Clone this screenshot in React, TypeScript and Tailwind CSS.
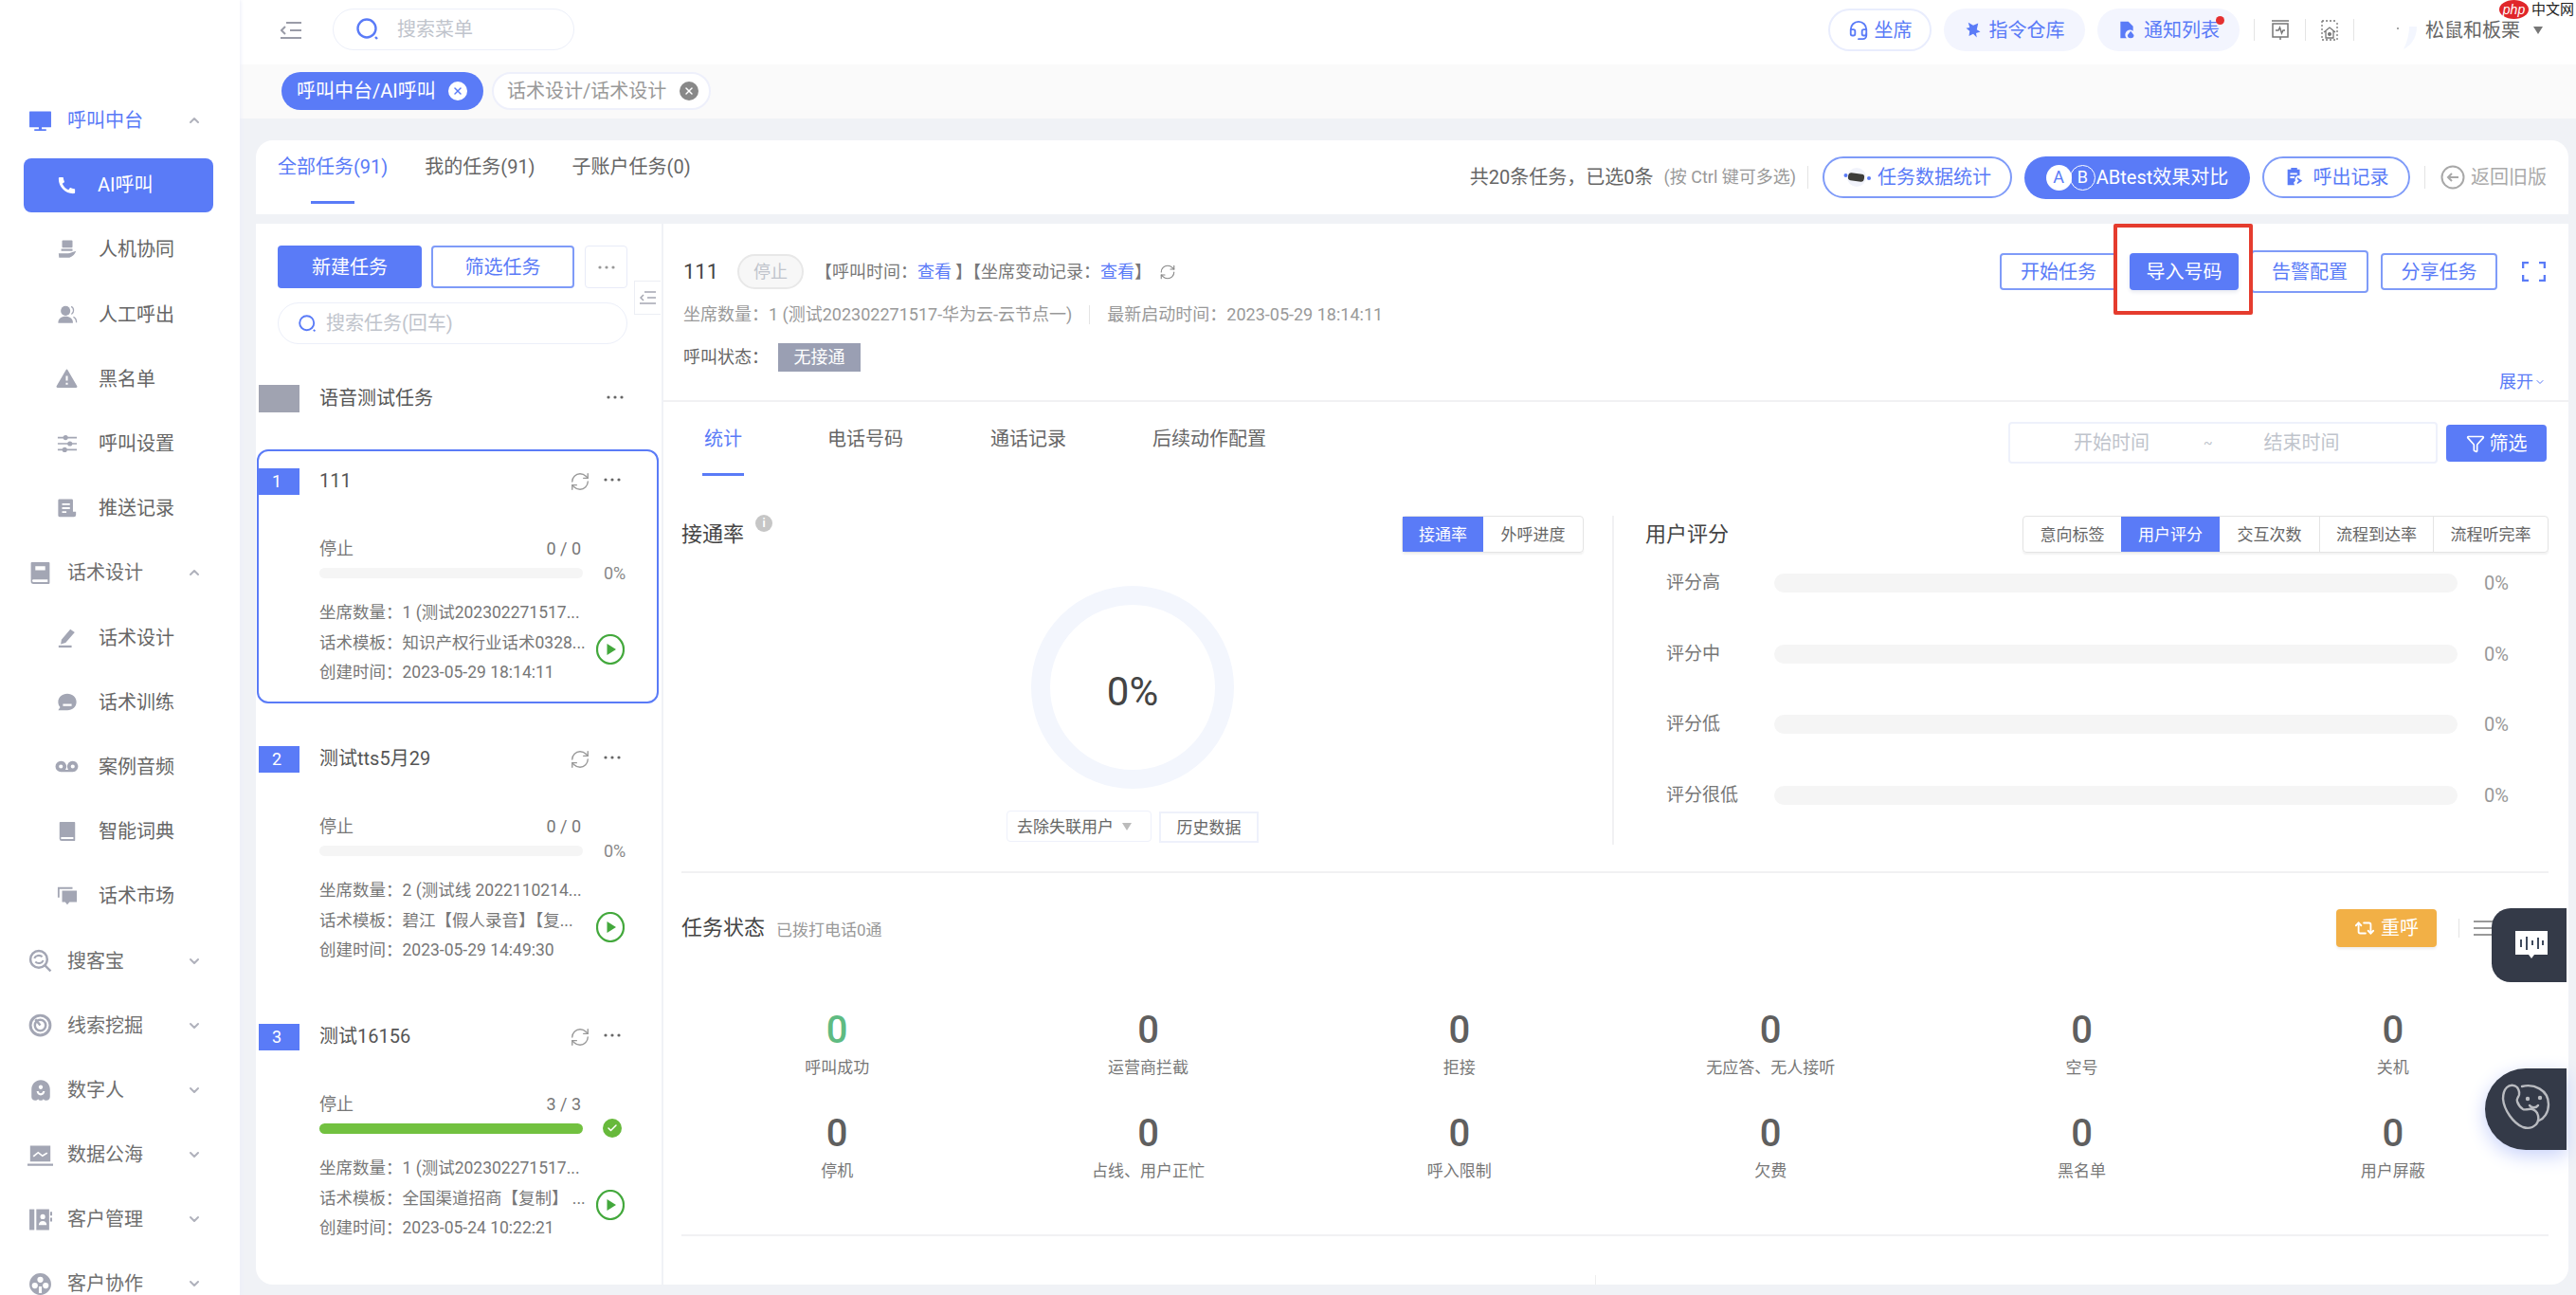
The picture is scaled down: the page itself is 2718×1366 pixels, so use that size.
import React from "react";
import { Check, ChevronDown, ChevronUp, RefreshCw, X, Filter, Repeat2, Headset } from "lucide-react";
import { RiPhoneFill, RiAlertFill, RiGhostSmileFill } from "react-icons/ri";

const P = "#5a7bf7";

function G({ size = 24, children, className = "" }: { size?: number; children: React.ReactNode; className?: string }) {
  return (
    <svg width={size} height={size} viewBox="0 0 24 24" fill="currentColor" className={className}>
      {children}
    </svg>
  );
}

const icons: Record<string, React.ReactNode> = {
  monitor: <path d="M1.5 2.5h21a.5.5 0 0 1 .5.5v15a.5.5 0 0 1-.5.5h-9v2H18v1.5H6V20.500h4.500v-2h-9A.5.5 0 0 1 1 18V3a.5.5 0 0 1 .5-.5z" />,
  hand: (
    <>
      <path d="M7 1.500h10a1 1 0 0 1 1 1V9a1 1 0 0 1-1 1H7a1 1 0 0 1-1-1V2.500a1 1 0 0 1 1-1zM5 11.500h13V14H5z" />
      <path d="M2 16.500h11c1.500 0 2.500-.3 4-1l5-1.500c-1 3.500-3.500 6.500-7.500 7.500H2.500z" />
    </>
  ),
  people: (
    <>
      <circle cx="10" cy="7.500" r="5.500" />
      <path d="M1.500 21.500c0-5 3.500-7.500 8.500-7.500s8.500 2.500 8.500 7.500z" />
      <path d="M16.500 2.500c3.500 1.500 3.500 7 .3 9M19 14.500c2.500 1 3.500 3.500 3.500 6.500" fill="none" stroke="currentColor" strokeWidth="1.400" />
    </>
  ),
  sliders: (
    <>
      <path d="M1 5h22M1 12h22M1 19h22" fill="none" stroke="currentColor" strokeWidth="1.800" />
      <circle cx="10" cy="5" r="2.800" />
      <circle cx="15" cy="12" r="2.800" />
      <circle cx="9" cy="19" r="2.800" />
    </>
  ),
  doc: (
    <path
      fillRule="evenodd"
      d="M3 1.500h14a1.500 1.500 0 0 1 1.500 1.500v13H22v3.500a2.500 2.500 0 0 1-2.500 2.500H3a1.500 1.500 0 0 1-1.500-1.500V3A1.500 1.500 0 0 1 3 1.500zM6 6.500v2h9v-2zM6 11v2h9v-2zM6 15.500v2h5v-2z"
    />
  ),
  book: (
    <path
      fillRule="evenodd"
      d="M3.500 1h17a1 1 0 0 1 1 1v20a1 1 0 0 1-1 1H5a2.500 2.500 0 0 1-2.500-2.500V2a1 1 0 0 1 1-1zM7 5v4h10V5zM5 18.500c-1.500 0-1.500 2.500 0 2.500h14.500v-2.500z"
    />
  ),
  pen: (
    <>
      <path d="M15.500 2l5 3.500-10.500 12-5.500 1.500.8-5z" />
      <path d="M2 20.500h15V23H2z" />
    </>
  ),
  chat: (
    <path
      fillRule="evenodd"
      d="M12 2c6 0 10.500 3.800 10.500 9.500S18 21 12 21H1.500l2.300-3.500C2.300 15.800 1.500 13.800 1.500 11.500 1.500 5.800 6 2 12 2zM7 13.500v2.500h10v-2.500z"
    />
  ),
  voicemail: (
    <path
      fillRule="evenodd"
      d="M6 6.500a5.500 5.500 0 0 1 4.500 8.800h3A5.500 5.500 0 1 1 18 17.500H6a5.500 5.500 0 1 1 0-11zM6 10a2 2 0 1 0 0 4 2 2 0 0 0 0-4zm12 0a2 2 0 1 0 0 4 2 2 0 0 0 0-4z"
    />
  ),
  dict: (
    <path
      fillRule="evenodd"
      d="M4 1h16a1 1 0 0 1 1 1v20a1 1 0 0 1-1 1H5.500A2.500 2.500 0 0 1 3 20.500V2a1 1 0 0 1 1-1zM5.500 18.500c-1.300 0-1.300 2.200 0 2.200H19v-2.200z"
    />
  ),
  market: (
    <>
      <path d="M1 2h17v2H3v10H1z" />
      <path d="M6 6h17v13h-8.500L12 22l-2.500-3H6z" />
    </>
  ),
  searchCircle: (
    <>
      <circle cx="10.500" cy="10.500" r="8.500" fill="none" stroke="currentColor" strokeWidth="2.400" />
      <path d="M16.500 16.500l6 6" stroke="currentColor" strokeWidth="2.400" />
      <path d="M6 9.500c1-3 5.500-4 8-1.500M15 11.500c-1 3-5.500 4-8 1.500" fill="none" stroke="currentColor" strokeWidth="2" />
    </>
  ),
  target: (
    <>
      <circle cx="12" cy="12" r="10" fill="none" stroke="currentColor" strokeWidth="2.800" />
      <circle cx="12" cy="12" r="5.500" fill="none" stroke="currentColor" strokeWidth="2.400" />
      <path d="M7 6l5 6" stroke="currentColor" strokeWidth="2.400" />
    </>
  ),
  laptop: (
    <path
      fillRule="evenodd"
      d="M2.500 3h19v15h-19zM5 12.500l1 1.200 4-3.200 4 3 5-3-1-1.200-4 2.400-4-3-4.500 3.600zM0 20h24v2H0z"
    />
  ),
  contacts: (
    <>
      <path d="M1 1.500h5v21H1z" />
      <path
        fillRule="evenodd"
        d="M8 1.500h13v21H8zM14.500 6.500a2.500 2.500 0 1 0 0 5 2.500 2.500 0 0 0 0-5zM10.500 17.500h8c0-2.500-1.800-4-4-4s-4 1.500-4 4z"
      />
      <path d="M22 4h2v4h-2zM22 10h2v4h-2z" />
    </>
  ),
  palette: (
    <path
      fillRule="evenodd"
      d="M12 1a11 11 0 1 1 0 22 11 11 0 0 1 0-22zM12 4.500a3 3 0 1 0 0 6 3 3 0 0 0 0-6zM6.500 10.500a3 3 0 1 0 0 6 3 3 0 0 0 0-6zM17.500 10.500a3 3 0 1 0 0 6 3 3 0 0 0 0-6zM10.500 14.500v6.500h3v-6.500z"
    />
  ),
};

type Row = { label: string; icon: React.ReactNode; kind: "group" | "item" | "active"; open?: boolean; blue?: boolean };
const g = (n: string) => <G size={n === "laptop" ? 27 : 25}>{icons[n]}</G>;
const s = (n: string) => <G size={n === "voicemail" ? 25 : 22}>{icons[n]}</G>;
const rows: Row[] = [
  { label: "呼叫中台", icon: g("monitor"), kind: "group", open: true, blue: true },
  { label: "AI呼叫", icon: <RiPhoneFill size={23} />, kind: "active" },
  { label: "人机协同", icon: s("hand"), kind: "item" },
  { label: "人工呼出", icon: s("people"), kind: "item" },
  { label: "黑名单", icon: <RiAlertFill size={25} />, kind: "item" },
  { label: "呼叫设置", icon: s("sliders"), kind: "item" },
  { label: "推送记录", icon: s("doc"), kind: "item" },
  { label: "话术设计", icon: g("book"), kind: "group", open: true },
  { label: "话术设计", icon: s("pen"), kind: "item" },
  { label: "话术训练", icon: s("chat"), kind: "item" },
  { label: "案例音频", icon: s("voicemail"), kind: "item" },
  { label: "智能词典", icon: s("dict"), kind: "item" },
  { label: "话术市场", icon: s("market"), kind: "item" },
  { label: "搜客宝", icon: g("searchCircle"), kind: "group" },
  { label: "线索挖掘", icon: g("target"), kind: "group" },
  { label: "数字人", icon: <RiGhostSmileFill size={26} />, kind: "group" },
  { label: "数据公海", icon: g("laptop"), kind: "group" },
  { label: "客户管理", icon: g("contacts"), kind: "group" },
  { label: "客户协作", icon: g("palette"), kind: "group" },
];

function Sidebar() {
  return (
    <aside className="w-[253px] shrink-0 bg-white pt-[93px] overflow-hidden shadow-[1px_0_4px_#eceef8] z-10">
      {rows.map((r, i) => {
        if (r.kind === "group") {
          const Chev = r.open ? ChevronUp : ChevronDown;
          return (
            <div key={i} className={`flex h-[68.200px] items-center ${r.blue ? `text-[#5a7bf7]` : "text-[#6e6e6e]"}`}>
              <span className={`ml-[29px] flex w-[27px] justify-center ${r.blue ? "text-[#5a7bf7]" : "text-[#a3a6b4]"}`}>{r.icon}</span>
              <span className="ml-[15px] w-[126px]">{r.label}</span>
              <Chev size={16} strokeWidth={3} className="text-[#b0b2bc]" />
            </div>
          );
        }
        if (r.kind === "active") {
          return (
            <div key={i} className="flex h-[68.200px] items-center">
              <div className="ml-[25px] flex h-[57px] w-[200px] items-center rounded-[8px] bg-[#5a7bf7] text-white">
                <span className="ml-[33px] flex w-[24px] justify-center">{r.icon}</span>
                <span className="ml-[21px]">{r.label}</span>
              </div>
            </div>
          );
        }
        return (
          <div key={i} className="flex h-[68.200px] items-center text-[#666]">
            <span className="ml-[58px] flex w-[25px] justify-center text-[#a3a6b4]">{r.icon}</span>
            <span className="ml-[21px]">{r.label}</span>
          </div>
        );
      })}
    </aside>
  );
}

function SearchGlyph({ size }: { size: number }) {
  return (
    <svg width={size} height={size} viewBox="0 0 24 24" fill="none" stroke={P} strokeWidth="2.400">
      <circle cx="11" cy="11" r="9.500" />
      <path d="M20 20l2 2" />
    </svg>
  );
}

function TopBar() {
  return (
    <header className="flex h-[68px] items-start bg-white pt-[9px]">
      <svg width="22" height="20" viewBox="0 0 22 20" fill="none" stroke="#9a9ca8" strokeWidth="2" className="ml-[43px] mt-[13px]">
        <path d="M6 2h16M10 10h12M0 18h22M5 6l-4 4 4 4" />
      </svg>
      <div className="ml-[33px] flex h-[44px] w-[255px] items-center rounded-full border border-[#eceff9] bg-white">
        <span className="ml-[24px]">
          <SearchGlyph size={24} />
        </span>
        <span className="ml-[19px] text-[#c0c4cc]">搜索菜单</span>
      </div>
      <div className="ml-auto flex items-center pr-[35px] text-[#5a7bf7]">
        <div className="flex h-[45px] w-[109px] items-center justify-center gap-[6px] rounded-full border-2 border-[#e9edfd] bg-white">
          <Headset size={22} strokeWidth={2} />
          <span>坐席</span>
        </div>
        <div className="ml-[13px] flex h-[45px] w-[149px] items-center justify-center gap-[8px] rounded-full bg-[#f3f5fe]">
          <G size={18}>
            <path d="M5 1l7 4 7-3-2 9 5 3-6 2 1 6-5-5-6 3 1-7-5-4 5-1z" />
          </G>
          <span>指令仓库</span>
        </div>
        <div className="relative ml-[13px] flex h-[45px] w-[150px] items-center justify-center gap-[8px] rounded-full bg-[#f3f5fe]">
          <G size={20}>
            <path d="M4 1h10l6 6v6a6 6 0 0 0-8 9H4z" />
            <path d="M17 13l4 5a4 4 0 1 1-8 0z" />
          </G>
          <span>通知列表</span>
          <span className="absolute left-[125px] top-[8px] h-[9px] w-[9px] rounded-full bg-[#e53030]" />
        </div>
        <span className="ml-[15px] h-[23px] w-px bg-[#e4e4e4]" />
        <svg width="20" height="22" viewBox="0 0 20 22" fill="none" stroke="#777" strokeWidth="1.500" className="ml-[17px]">
          <path d="M1 1h18M2 4h16v14H2zM5 11h3l1.500-3 2 6 1.500-3h2" />
          <path d="M10 18v3" />
        </svg>
        <span className="ml-[16px] h-[23px] w-px bg-[#e4e4e4]" />
        <svg width="18" height="22" viewBox="0 0 18 22" fill="none" stroke="#777" strokeWidth="1.300" className="ml-[16px]">
          <path d="M1 1h16M1 1v20h16V1" strokeDasharray="2 2" />
          <path d="M3 13l6-5 6 5M5 12v7h8v-7" />
          <circle cx="9" cy="15" r="1.400" fill="#777" />
        </svg>
        <span className="ml-[16px] h-[23px] w-px bg-[#e4e4e4]" />
        <svg width="70" height="44" viewBox="0 0 70 44" className="ml-[2px]">
          <path d="M64 18c0 12-6 20-14 24 4-8 6-16 6-24z" fill="#f3f6fe" />
          <circle cx="44" cy="20" r="1" fill="#888" />
        </svg>
        <span className="ml-[3px] text-[#666]">松鼠和板栗</span>
        <span className="ml-[14px] h-0 w-0 border-x-[5px] border-t-[8px] border-x-transparent border-t-[#777]" />
      </div>
    </header>
  );
}

function TabBar() {
  return (
    <div className="flex h-[57px] items-start gap-[9px] bg-[#fafafa] pl-[44px] pt-[8px]">
      <div className="flex h-[40px] w-[213px] items-center rounded-full bg-[#5a7bf7] pl-[16px] text-white">
        <span className="w-[160px] whitespace-nowrap">呼叫中台/AI呼叫</span>
        <span className="flex h-[20px] w-[20px] items-center justify-center rounded-full bg-white text-[#5a7bf7]">
          <X size={12} strokeWidth={3} />
        </span>
      </div>
      <div className="flex h-[40px] w-[231px] items-center rounded-full border-2 border-[#eef0fb] bg-white pl-[14px] text-[#999]">
        <span className="w-[182px] whitespace-nowrap">话术设计/话术设计</span>
        <span className="flex h-[20px] w-[20px] items-center justify-center rounded-full bg-[#888] text-white">
          <X size={12} strokeWidth={3} />
        </span>
      </div>
    </div>
  );
}

function TaskTabs() {
  return (
    <div className="flex h-[78px] shrink-0 items-start rounded-t-[18px] bg-white pl-[23px] pr-[23px]">
      <div className="flex flex-col items-center pt-[14px]">
        <span className="text-[#5a7bf7]">全部任务(91)</span>
        <span className="mt-[22px] h-[3px] w-[46px] bg-[#5a7bf7]" />
      </div>
      <span className="ml-[39px] pt-[14px] text-[#666]">我的任务(91)</span>
      <span className="ml-[39px] pt-[14px] text-[#666]">子账户任务(0)</span>
      <div className="ml-auto flex h-[78px] items-center text-[#666]">
        <span>共20条任务，已选0条</span>
        <span className="ml-[11px] text-[18px] text-[#999]">(按 Ctrl 键可多选)</span>
        <span className="ml-[12px] h-[24px] w-px bg-[#e4e4e4]" />
        <div className="ml-[15px] flex h-[44px] w-[200px] items-center justify-center gap-[6px] rounded-full border-2 border-[#7f9bf8] bg-white text-[#5a7bf7]">
          <svg width="30" height="22" viewBox="0 0 30 22">
            <circle cx="14" cy="11" r="10" fill="#f1f3fb" />
            <rect x="5" y="7" width="17" height="8" rx="3" fill="#3d3d3a" transform="rotate(8 14 11)" />
            <circle cx="2.500" cy="9" r="2" fill={P} />
            <circle cx="27" cy="12" r="2" fill={P} />
          </svg>
          <span>任务数据统计</span>
        </div>
        <div className="ml-[13px] flex h-[45px] w-[238px] items-center justify-center rounded-full bg-[#5a7bf7] text-white">
          <span className="flex h-[27px] w-[27px] items-center justify-center rounded-full bg-white text-[18px] text-[#5a7bf7]">A</span>
          <span className="ml-[-2px] flex h-[27px] w-[27px] items-center justify-center rounded-full border border-white text-[18px]">B</span>
          <span className="ml-[1px]">ABtest效果对比</span>
        </div>
        <div className="ml-[13px] flex h-[44px] w-[156px] items-center justify-center gap-[9px] rounded-full border-2 border-[#7f9bf8] bg-white text-[#5a7bf7]">
          <G size={22}>
            <path fillRule="evenodd" d="M4 3h4V1h7v2h3v7h-2c-3 .5-4 3-3 6l-2 2 1 3H4zM7 7v2h8V7zM7 11v2h5v-2z" />
            <path d="M15 12l6 4-6 4v-2l2-2-2-2z" />
          </G>
          <span>呼出记录</span>
        </div>
        <span className="ml-[15px] h-[24px] w-px bg-[#e4e4e4]" />
        <svg width="26" height="26" viewBox="0 0 26 26" fill="none" stroke="#a8a8a8" strokeWidth="2" className="ml-[16px]">
          <circle cx="13" cy="13" r="11.500" />
          <path d="M19 13H9M12 9l-4 4 4 4" />
        </svg>
        <span className="ml-[6px] text-[#aaa]">返回旧版</span>
      </div>
    </div>
  );
}

function Dots({ c = "#666" }: { c?: string }) {
  return (
    <svg width="18" height="4" viewBox="0 0 18 4" fill={c}>
      <circle cx="2" cy="2" r="1.600" />
      <circle cx="9" cy="2" r="1.600" />
      <circle cx="16" cy="2" r="1.600" />
    </svg>
  );
}

function Play() {
  return (
    <svg width="30" height="32" viewBox="0 0 30 32" fill="none" className="mt-[13px] shrink-0">
      <ellipse cx="15" cy="16" rx="14" ry="15" stroke="#43a83c" strokeWidth="2.200" />
      <path d="M11.500 10v12l9.500-6z" fill="#43a83c" />
    </svg>
  );
}

type Card = { n: string; name: string; count: string; done?: boolean; meta: string[]; active?: boolean };
const cards: Card[] = [
  { n: "1", name: "111", count: "0 / 0", active: true, meta: ["坐席数量：1 (测试202302271517...", "话术模板：知识产权行业话术0328...", "创建时间：2023-05-29 18:14:11"] },
  { n: "2", name: "测试tts5月29", count: "0 / 0", meta: ["坐席数量：2 (测试线 2022110214...", "话术模板：碧江【假人录音】【复...", "创建时间：2023-05-29 14:49:30"] },
  { n: "3", name: "测试16156", count: "3 / 3", done: true, meta: ["坐席数量：1 (测试202302271517...", "话术模板：全国渠道招商【复制】 ...", "创建时间：2023-05-24 10:22:21"] },
];

function TaskCard({ c }: { c: Card }) {
  return (
    <div className={`ml-px mt-[25px] h-[268px] w-[424px] shrink-0 rounded-[12px] border-2 ${c.active ? "border-[#5a7bf7]" : "border-transparent"}`}>
      <div className="mt-[18px] flex h-[28px] items-center">
        <span className="flex h-[28px] w-[43px] items-center pl-[14px] text-[18px] text-white bg-[#5a7bf7]">{c.n}</span>
        <span className="ml-[21px] mb-[2px] text-[#555]">{c.name}</span>
        <RefreshCw size={22} strokeWidth={1.500} className="ml-auto text-[#999]" />
        <span className="ml-[14px] mr-[38px] mb-[4px]">
          <Dots />
        </span>
      </div>
      <div className="pl-[64px]">
        <div className="mt-[45px] flex w-[278px] justify-between pr-[2px] text-[18px] leading-[24px] text-[#777]">
          <span>停止</span>
          <span>{c.count}</span>
        </div>
        <div className="mt-[7px] flex h-[12px] items-center">
          <span className={`h-[11px] w-[278px] rounded-full ${c.done ? "bg-[#72c140]" : "bg-[#f5f5f5]"}`} />
          {c.done ? (
            <span className="ml-[21px] flex h-[20px] w-[20px] items-center justify-center rounded-full bg-[#67b93b] text-white">
              <Check size={12} strokeWidth={3} />
            </span>
          ) : (
            <span className="ml-[22px] translate-y-[1px] text-[18px] text-[#888]">0%</span>
          )}
        </div>
        <div className="mt-[21px] flex items-center">
          <div className="w-[292px] whitespace-nowrap text-[17.500px] leading-[31.500px] text-[#777]">
            {c.meta.map((m) => (
              <div key={m} className="overflow-hidden">
                {m}
              </div>
            ))}
          </div>
          <Play />
        </div>
      </div>
    </div>
  );
}

function LeftPanel() {
  return (
    <div className="relative flex w-[428px] shrink-0 flex-col overflow-hidden rounded-bl-[18px] bg-white pt-[23px]">
      <div className="flex pl-[23px]">
        <div className="flex h-[45px] w-[152px] items-center justify-center rounded-[4px] bg-[#5a7bf7] text-white">新建任务</div>
        <div className="ml-[10px] flex h-[45px] w-[151px] items-center justify-center rounded-[4px] border-2 border-[#7f9bf8] text-[#5a7bf7]">筛选任务</div>
        <div className="ml-[11px] flex h-[45px] w-[45px] items-center justify-center rounded-[4px] border border-[#e8ebf8]">
          <Dots c="#999" />
        </div>
      </div>
      <span className="absolute left-[399px] top-[60px] flex h-[36px] w-[28px] items-center justify-center border border-r-0 border-[#eceef4] bg-white">
        <svg width="17" height="16" viewBox="0 0 17 16" fill="none" stroke="#a5a7b2" strokeWidth="1.500">
          <path d="M5 2h12M8 8h9M0 14h17M4 5L1 8l3 3" />
        </svg>
      </span>
      <div className="ml-[23px] mt-[15px] flex h-[44px] w-[369px] shrink-0 items-center rounded-full border border-[#eceff9]">
        <span className="ml-[21px]">
          <SearchGlyph size={19} />
        </span>
        <span className="ml-[10px] text-[#c0c4cc]">搜索任务(回车)</span>
      </div>
      <div className="ml-px mt-[24px] h-[62px] shrink-0">
        <div className="mt-[19px] flex h-[29px] items-center pl-[2px]">
          <span className="h-[29px] w-[43px] bg-[#a0a3b1]" />
          <span className="ml-[21px] mb-[2px] text-[#555]">语音测试任务</span>
          <span className="ml-auto mr-[40px] mb-[4px]">
            <Dots />
          </span>
        </div>
      </div>
      {cards.map((c) => (
        <TaskCard key={c.n} c={c} />
      ))}
    </div>
  );
}

function Outline({ w, h = 39, label, cls = "" }: { w: number; h?: number; label: string; cls?: string }) {
  return (
    <div
      style={{ width: w, height: h }}
      className={`flex items-center justify-center rounded-[4px] border-2 border-[#7f9bf8] bg-white text-[#5a7bf7] ${cls}`}
    >
      {label}
    </div>
  );
}

function PanelHeader() {
  return (
    <div className="flex h-[188px] shrink-0 justify-between border-b-2 border-[#f1f1f3] px-[21px]">
      <div>
        <div className="mt-[32px] flex h-[37px] items-center text-[18px] text-[#777]">
          <span className="w-[38px] text-[22px] text-[#444]">111</span>
          <span className="ml-[19px] flex h-[37px] w-[70px] items-center justify-center rounded-full border-2 border-[#e8e8e8] bg-[#f7f7f7] text-[#c0c4cc]">停止</span>
          <span className="ml-[12px]">【呼叫时间：</span>
          <span className="text-[#5a7bf7]">查看</span>
          <span className="ml-[4px]">】【坐席变动记录：</span>
          <span className="text-[#5a7bf7]">查看</span>
          <span>】</span>
          <RefreshCw size={18} strokeWidth={1.500} className="ml-[8px] text-[#888]" />
        </div>
        <div className="mt-[15px] flex h-[24px] items-center text-[18px] text-[#999]">
          <span>坐席数量：1 (测试202302271517-华为云-云节点一)</span>
          <span className="ml-[18px] h-[20px] w-px bg-[#e4e4e4]" />
          <span className="ml-[18px]">最新启动时间：2023-05-29 18:14:11</span>
        </div>
        <div className="mt-[18px] flex h-[30px] items-center text-[18px] text-[#666]">
          <span className="w-[100px]">呼叫状态：</span>
          <span className="flex h-[30px] w-[87px] items-center justify-center bg-[#9a9fb3] text-white">无接通</span>
        </div>
      </div>
      <div className="flex flex-col items-end pr-[3px]">
        <div className="mt-[28px] flex h-[45px] items-center">
          <Outline w={124} label="开始任务" cls="border-[#7f9bf8]" />
          <div className="relative z-10 ml-[13px] w-[115px]">
            <div className="absolute left-[-17px] top-[-31px] h-[96px] w-[147px] rounded-[2px] border-[4px] border-[#e53c2e] bg-white" />
            <div className="relative flex h-[39px] items-center justify-center rounded-[4px] bg-[#5a7bf7] text-white shadow-[0_2px_4px_#e6e8f0]">导入号码</div>
          </div>
          <Outline w={124} h={45} label="告警配置" cls="ml-[13px]" />
          <Outline w={123} label="分享任务" cls="ml-[13px]" />
          <svg width="25" height="21" viewBox="0 0 25 21" fill="none" stroke={P} strokeWidth="2.600" className="ml-[26px]">
            <path d="M1 7V1h6M18 1h6v6M24 14v6h-6M7 20H1v-6" />
          </svg>
        </div>
        <div className="mt-[82px] flex h-[24px] items-center gap-[1px] text-[18px] text-[#5a7bf7]">
          <span>展开</span>
          <ChevronDown size={12} strokeWidth={2} />
        </div>
      </div>
    </div>
  );
}

function PanelTabs() {
  return (
    <div className="flex h-[78px] shrink-0 items-start pl-[43px] pr-[23px]">
      <div className="-mx-[2px] h-[78px] border-b-[3px] border-[#5a7bf7] px-[2px] pt-[25px] text-[#5a7bf7]">统计</div>
      <div className="ml-[90px] pt-[25px] text-[#666]">电话号码</div>
      <div className="ml-[92px] pt-[25px] text-[#666]">通话记录</div>
      <div className="ml-[91px] pt-[25px] text-[#666]">后续动作配置</div>
      <div className="ml-auto mt-[21px] flex h-[44px] w-[453px] items-center rounded-[4px] border-2 border-[#eef1fb] text-[#c0c4cc]">
        <span className="ml-[67px]">开始时间</span>
        <span className="ml-[57px] text-[14px]">~</span>
        <span className="ml-[54px]">结束时间</span>
      </div>
      <div className="ml-[9px] mt-[24px] flex h-[39px] w-[106px] items-center justify-center gap-[5px] rounded-[4px] bg-[#5a7bf7] text-white">
        <Filter size={20} strokeWidth={2} />
        <span>筛选</span>
      </div>
    </div>
  );
}

function Segmented({ items, active }: { items: { t: string; w: number }[]; active: number }) {
  return (
    <div className="flex h-[39px] rounded-[4px] border border-[#e4e4e4] text-[17px] text-[#666] shadow-[0_2px_2px_#f2f2f2]">
      {items.map((it, i) => (
        <span
          key={it.t}
          style={{ width: it.w }}
          className={`flex items-center justify-center ${i === active ? "bg-[#5a7bf7] text-white" : ""} ${i > 0 && i !== active && i - 1 !== active ? "border-l border-[#e4e4e4]" : ""}`}
        >
          {it.t}
        </span>
      ))}
    </div>
  );
}

function StatsBlock() {
  return (
    <div className="ml-[19px] mr-[21px] flex h-[419px] shrink-0 border-b-2 border-[#f1f1f3] pt-[42px]">
      <div className="w-[982px] pr-[30px]">
        <div className="flex h-[39px] items-center justify-between">
          <span className="flex text-[22px] text-[#444]">
            接通率
            <span className="ml-[12px] mt-[-7px] flex h-[18px] w-[18px] items-center justify-center rounded-full bg-[#c6c6c6] text-[12px] font-bold leading-none text-white">i</span>
          </span>
          <Segmented items={[{ t: "接通率", w: 85 }, { t: "外呼进度", w: 105 }]} active={0} />
        </div>
        <div className="mt-[35px] flex justify-center">
          <div className="flex h-[214px] w-[214px] items-center justify-center rounded-full border-[20px] border-[#f3f6fd] pt-[10px] text-[42px] leading-none text-[#444]">0%</div>
        </div>
        <div className="mt-[23px] flex justify-center">
          <div className="flex h-[33px] w-[153px] items-center rounded-[4px] border border-[#eef1fb] pl-[10px] text-[17px] text-[#666]">
            <span>去除失联用户</span>
            <span className="ml-[9px] h-0 w-0 border-x-[5px] border-t-[8px] border-x-transparent border-t-[#bbb]" />
          </div>
          <div className="ml-[8px] mt-[1px] flex h-[33px] w-[105px] items-center justify-center border-2 border-[#eef1fb] text-[17px] text-[#666]">历史数据</div>
        </div>
      </div>
      <div className="h-[347px] flex-1 border-l-2 border-[#f1f1f3] pl-[33px]">
        <div className="flex h-[39px] items-center justify-between">
          <span className="text-[22px] text-[#444]">用户评分</span>
          <Segmented
            items={[
              { t: "意向标签", w: 103 },
              { t: "用户评分", w: 104 },
              { t: "交互次数", w: 105 },
              { t: "流程到达率", w: 120 },
              { t: "流程听完率", w: 121 },
            ]}
            active={1}
          />
        </div>
        <div className="mt-[22px] flex flex-col gap-[54.500px] pl-[22px]">
          {["评分高", "评分中", "评分低", "评分很低"].map((t) => (
            <div key={t} className="flex h-[20px] items-center text-[#888]">
              <span className="w-[114px] text-[19px] text-[#777]">{t}</span>
              <span className="h-[20px] w-[721px] rounded-full bg-[#f5f5f5]" />
              <span className="ml-[28px] text-[20px] text-[#999]">0%</span>
            </div>
          ))}
        </div>
      </div>
    </div>
  );
}

const statusItems = ["呼叫成功", "运营商拦截", "拒接", "无应答、无人接听", "空号", "关机", "停机", "占线、用户正忙", "呼入限制", "欠费", "黑名单", "用户屏蔽"];

function StatusBlock() {
  return (
    <div className="ml-[19px] mr-[21px] shrink-0 border-b-2 border-[#f1f1f3] pt-[38px] h-[383px]">
      <div className="flex h-[40px] items-center">
        <span className="text-[22px] text-[#444]">任务状态</span>
        <span className="ml-[12px] mt-[3px] text-[17px] text-[#999]">已拨打电话0通</span>
        <div className="ml-auto flex h-[40px] w-[106px] items-center justify-center gap-[6px] rounded-[4px] bg-[#f2b046] text-white shadow-[0_2px_3px_#eee]">
          <Repeat2 size={22} strokeWidth={2} />
          <span>重呼</span>
        </div>
        <span className="ml-[23px] h-[20px] w-px bg-[#e4e4e4]" />
        <svg width="24" height="18" viewBox="0 0 24 18" fill="none" stroke="#999" strokeWidth="2" className="ml-[15px] mr-[55px]">
          <path d="M0 2h24M0 9h24M0 16h24" />
        </svg>
      </div>
      <div className="mt-[62px] grid grid-cols-6">
        {statusItems.map((t, i) => (
          <div key={t} className="flex h-[109px] flex-col items-center">
            <span className={`translate-y-[2px] text-[40px] font-medium leading-[48px] ${i === 0 ? "text-[#5fbb82]" : "text-[#5f5f5f]"}`}>0</span>
            <span className="mt-[4px] text-[17px] leading-[26px] text-[#777]">{t}</span>
          </div>
        ))}
      </div>
    </div>
  );
}

function RightPanel() {
  return (
    <div className="relative flex min-w-0 flex-1 flex-col overflow-hidden rounded-br-[18px] bg-white">
      <PanelHeader />
      <PanelTabs />
      <StatsBlock />
      <StatusBlock />
      <div className="ml-[19px] mt-[41px] flex h-[60px] shrink-0 text-[22px] text-[#444]">
        <span className="w-[964px] pt-[8px]">接通时段</span>
        <span className="border-l border-[#eee] pl-[47px] pt-[8px]">通话时长</span>
      </div>
    </div>
  );
}

function Floats() {
  return (
    <>
      <div className="absolute left-[2629px] top-[958px] z-20 flex h-[78px] w-[79px] items-center justify-center rounded-l-[20px] bg-[#343a48]">
        <svg width="36" height="32" viewBox="0 0 36 32" className="ml-[4px]">
          <path d="M1 1h34v25H21l-3 4-3-4H1z" fill="#fff" />
          <path d="M7 10v8M13 7v14M19 11v5M25 8v12M30 11v5" stroke="#3f4a5c" strokeWidth="2" />
        </svg>
      </div>
      <div className="absolute left-[2622px] top-[1127px] z-20 flex h-[86px] w-[86px] items-center justify-center rounded-l-[44px] bg-[#343a48] shadow-[0_6px_20px_#c8d2fa]">
        <svg width="52" height="56" viewBox="0 0 52 56" fill="none" stroke="#b9bbc0" strokeWidth="2.400" strokeLinecap="round">
          <path d="M6 5c3-3 8-3 11 0 2 3 3 7 1 10-1 2-2 3-1 5 1 3 3 6 6 8 2 1 4 0 6 0 4-1 7 1 9 4 2 4 2 8-1 12-3 3-8 5-14 3C13 43 3 29 2 17 2 12 3 8 6 5z" />
          <path d="M22 4c12-3 28 3 28 19 0 9-5 15-10 17" />
          <circle cx="28" cy="17" r="1" fill="#b9bbc0" />
          <circle cx="41" cy="16" r="1" fill="#b9bbc0" />
          <path d="M30 24c2 3 7 3 9 0" />
        </svg>
      </div>
    </>
  );
}

function Watermark() {
  return (
    <div className="absolute right-0 top-0 z-30 flex h-[20px] w-[81px] items-center">
      <span className="flex h-[20px] w-[31px] shrink-0 items-center justify-center rounded-[50%] bg-[#e0262a] font-['Liberation_Sans',sans-serif] text-[14px] italic leading-none text-white">php</span>
      <span className="ml-[3px] shrink-0 whitespace-nowrap text-[15px] leading-none text-[#222]">中文网</span>
    </div>
  );
}

export default function App() {
  return (
    <div className="relative flex h-[1366px] w-[2718px] overflow-hidden bg-[#f0f2f6] font-['Roboto','Noto_Sans_CJK_SC',sans-serif] text-[20px] leading-[28px]">
      <Sidebar />
      <main className="flex min-w-0 flex-1 flex-col">
        <TopBar />
        <TabBar />
        <div className="flex min-h-0 flex-1 flex-col pb-[11px] pl-[17px] pr-[8px] pt-[23px]">
          <TaskTabs />
          <div className="mt-[10px] flex min-h-0 flex-1 gap-[2px]">
            <LeftPanel />
            <RightPanel />
          </div>
        </div>
      </main>
      <Floats />
      <Watermark />
    </div>
  );
}
